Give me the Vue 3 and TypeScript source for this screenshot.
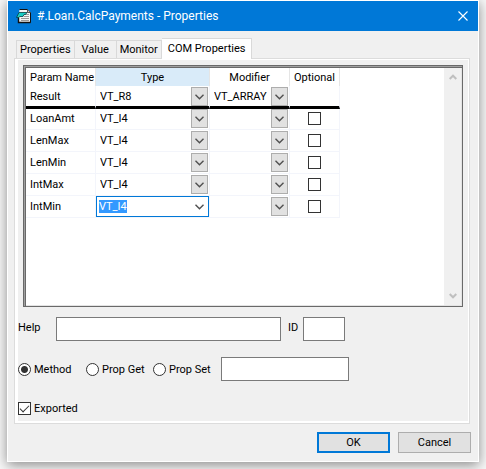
<script setup lang="ts">
import { ref } from 'vue'

interface Param {
  name: string
  type: string
  modifier: string
  optional: boolean | null
}

const tabs = ['Properties', 'Value', 'Monitor', 'COM Properties']
const activeTab = ref('COM Properties')
const types = ['VT_I4', 'VT_R8']
const modifiers = ['', 'VT_ARRAY']
const editing = ref('IntMin')
const kind = ref('Method')
const help = ref('')
const id = ref('')
const propName = ref('')
const exported = ref(true)

const params = ref<Param[]>([
  { name: 'Result', type: 'VT_R8', modifier: 'VT_ARRAY', optional: null },
  { name: 'LoanAmt', type: 'VT_I4', modifier: '', optional: false },
  { name: 'LenMax', type: 'VT_I4', modifier: '', optional: false },
  { name: 'LenMin', type: 'VT_I4', modifier: '', optional: false },
  { name: 'IntMax', type: 'VT_I4', modifier: '', optional: false },
  { name: 'IntMin', type: 'VT_I4', modifier: '', optional: false },
])
</script>

<template>
  <main class="dialog">
    <header class="titlebar">
      <svg class="app-icon" width="16" height="16" viewBox="0 0 16 16" aria-hidden="true">
        <path d="M3.500 1.500H11.500L14.500 4.500V14.500H2.500V9" fill="#f4f4f4" stroke="#111" />
        <path d="M11.500 1.500V4.500H14.500" fill="#ccc" stroke="#333" stroke-width=".8" />
        <path d="M2.500 10V14.500H14.500" fill="none" stroke="#111" stroke-width="1.400" />
        <path d="M9 6.500H13M8 8.500H13M5 10.500H13M5 12.500H13" stroke="#999" />
        <path d="M.5 9.500L3 4.500H11L9.500 6.500H8L7 8.500H4L2.500 9.500Z" fill="#19cdc4" stroke="#063f43" stroke-width=".8" />
      </svg>
      <h1>#.Loan.CalcPayments - Properties</h1>
      <button class="close" type="button" aria-label="Close">
        <svg width="10" height="10" viewBox="0 0 10 10"><path d="M.5 .5L9.500 9.500M9.500 .5L.5 9.500" stroke="#fff" stroke-width="1.100" /></svg>
      </button>
    </header>

    <div class="content">
      <nav class="tabs" role="tablist">
        <button
          v-for="tab in tabs"
          :key="tab"
          type="button"
          role="tab"
          class="tab"
          :class="{ active: tab === activeTab }"
          :aria-selected="tab === activeTab"
          @click="activeTab = tab"
        >{{ tab }}</button>
      </nav>

      <section class="panel">
        <div class="list">
          <div class="list-body">
            <table>
              <colgroup>
                <col class="c-name"><col class="c-type"><col class="c-mod"><col class="c-opt">
              </colgroup>
              <thead>
                <tr>
                  <th class="left">Param Name</th>
                  <th class="current">Type</th>
                  <th>Modifier</th>
                  <th>Optional</th>
                </tr>
              </thead>
              <tbody>
                <tr v-for="p in params" :key="p.name" :class="{ result: p.optional === null }">
                  <td class="name">{{ p.name }}</td>
                  <td>
                    <div class="combo" :class="{ editing: p.name === editing }">
                      <select v-model="p.type" :aria-label="p.name + ' type'">
                        <option v-for="t in types" :key="t">{{ t }}</option>
                      </select>
                      <span class="arrow"><svg width="9" height="6" viewBox="0 0 9 6"><path d="M.5 .7L4.500 4.700L8.500 .7" /></svg></span>
                    </div>
                  </td>
                  <td>
                    <div class="combo">
                      <select v-model="p.modifier" :aria-label="p.name + ' modifier'">
                        <option v-for="m in modifiers" :key="m">{{ m }}</option>
                      </select>
                      <span class="arrow"><svg width="9" height="6" viewBox="0 0 9 6"><path d="M.5 .7L4.500 4.700L8.500 .7" /></svg></span>
                    </div>
                  </td>
                  <td class="opt">
                    <input v-if="p.optional !== null" v-model="p.optional" class="check" type="checkbox" :aria-label="p.name + ' optional'">
                  </td>
                </tr>
              </tbody>
            </table>
          </div>
          <div class="scrollbar" aria-hidden="true">
            <svg width="8" height="6" viewBox="0 0 8 6"><path d="M.7 5L4 1.700L7.300 5" /></svg>
            <svg width="8" height="6" viewBox="0 0 8 6"><path d="M.7 1L4 4.300L7.300 1" /></svg>
          </div>
        </div>

        <div class="row help-row">
          <label for="help" class="help-label">Help</label>
          <input id="help" v-model="help" class="field help" type="text">
          <label for="id" class="id-label">ID</label>
          <input id="id" v-model="id" class="field id" type="text">
        </div>

        <div class="row kind-row">
          <label class="choice method"><input v-model="kind" class="radio" type="radio" name="kind" value="Method">Method</label>
          <label class="choice get"><input v-model="kind" class="radio" type="radio" name="kind" value="Prop Get">Prop Get</label>
          <label class="choice set"><input v-model="kind" class="radio" type="radio" name="kind" value="Prop Set">Prop Set</label>
          <input v-model="propName" class="field prop-name" type="text" aria-label="Property name">
        </div>

        <label class="choice"><input v-model="exported" class="check" type="checkbox">Exported</label>
      </section>

      <footer class="actions">
        <button type="button" class="btn default">OK</button>
        <button type="button" class="btn">Cancel</button>
      </footer>
    </div>
  </main>
</template>

<style>
body {
  margin: 0;
  background: #f8f8f8;
}
#app {
  display: flow-root;
  overflow: hidden;
  padding-bottom: 7px;
}
</style>

<style scoped>
.dialog {
  margin: 0 7px;
  border: 1px solid #fff;
  background: #f0f0f0;
  box-shadow: 0 3px 12px rgba(0, 0, 0, 0.45);
  font-family: Roboto, "Liberation Sans", sans-serif;
  font-size: 11px;
  line-height: 13px;
  color: #000;
}
button, input, select {
  margin: 0;
  padding: 0;
  border: 0;
  font: inherit;
  color: inherit;
}
svg {
  display: block;
  fill: none;
}
.titlebar {
  display: flex;
  align-items: center;
  height: 30px;
  padding: 0 10px 0 8px;
  background: #0078d7;
  color: #fff;
}
h1 {
  flex: 1;
  margin: 0 0 0 5px;
  font-size: 12px;
  font-weight: 400;
  line-height: 16px;
  white-space: nowrap;
}
.close {
  background: none;
}
.content {
  padding: 7px 7px 8px 6px;
}
.tabs {
  display: flex;
  align-items: flex-end;
  padding-left: 2px;
}
.tab {
  min-width: 42px;
  height: 18px;
  padding: 0 3px;
  border: 1px solid #d9d9d9;
  border-width: 1px 1px 0 0;
  background: #f0f0f0;
  white-space: nowrap;
}
.tab:first-child {
  border-left-width: 1px;
}
.tab.active {
  height: 21px;
  margin-bottom: -1px;
  padding: 0 6px 2px;
  background: #fff;
}
.panel {
  margin-right: 1px;
  padding: 6px 6px 8px 3px;
  border: 1px solid #dcdcdc;
  box-shadow: inset 3px 0 #fff, inset -1px 0 #fff, inset 0 1px #fff, inset 0 -2px #fff;
}
.list {
  display: flex;
  box-sizing: border-box;
  height: 242px;
  margin: 0 0 10px 5px;
  padding: 2px 0 0 2px;
  border: 1px solid #696969;
  box-shadow: inset 1px 1px #a0a0a0, inset 2px 2px #696969;
  background: #fff;
}
.list-body {
  flex: 1;
  min-width: 0;
  border-bottom: 1px solid #e3e3e3;
}
.scrollbar {
  display: flex;
  flex-direction: column;
  justify-content: space-between;
  align-items: center;
  width: 17px;
  padding: 6px 0;
  border: 1px solid #e3e3e3;
  border-width: 0 1px 1px 0;
  background: #f0f0f0;
}
.scrollbar path {
  stroke: #bfbfbf;
  stroke-width: 2;
}
table {
  width: 314px;
  table-layout: fixed;
  border-collapse: separate;
  border-spacing: 0;
}
.c-name { width: 70px; }
.c-type { width: 114px; }
.c-mod { width: 80px; }
.c-opt { width: 50px; }
th {
  height: 18px;
  padding: 0;
  border-right: 1px solid #e5e5e5;
  font-weight: 400;
  white-space: nowrap;
}
th.left {
  padding-left: 4px;
  text-align: left;
}
th.current {
  background: #d9ebf9;
}
td {
  box-sizing: border-box;
  height: 22px;
  padding: 0;
  border-right: 1px solid #f3f5fb;
  border-bottom: 1px solid #f3f5fb;
}
.result td {
  height: 23px;
  padding-top: 1px;
  border-bottom: 3px solid #000;
}
.result + tr td {
  height: 21px;
  padding-bottom: 1px;
}
.name {
  padding-left: 4px;
}
.combo {
  display: flex;
  align-items: center;
  box-sizing: border-box;
  height: 19px;
  padding: 0 1px 0 4px;
}
.combo select {
  flex: 1;
  min-width: 0;
  height: 13px;
  margin-right: -17px;
  padding-right: 17px;
  appearance: none;
  border-radius: 0;
  background: transparent;
  outline: 0;
}
.arrow {
  display: flex;
  flex: none;
  align-items: center;
  justify-content: center;
  box-sizing: border-box;
  width: 17px;
  height: 19px;
  border: 1px solid #adadad;
  background: #e1e1e1;
  pointer-events: none;
}
.arrow path {
  stroke: #505050;
  stroke-width: 1.4;
}
.combo.editing {
  justify-content: space-between;
  height: 21px;
  padding: 0 0 0 2px;
  border: 1px solid #0078d7;
  background: #fff;
}
.combo.editing select {
  flex: none;
  field-sizing: content;
  margin: 0;
  padding: 0;
  background: #3399ff;
  color: #fff;
}
.combo.editing .arrow {
  border-color: transparent;
  background: none;
}
.opt {
  line-height: 0;
  text-align: center;
}
.check {
  appearance: none;
  box-sizing: border-box;
  width: 13px;
  height: 13px;
  border: 1px solid #333;
  background: #fff;
  vertical-align: middle;
}
.check:checked::before {
  content: "";
  display: block;
  box-sizing: border-box;
  width: 9px;
  height: 5px;
  margin: 2px 1px;
  border: solid #333;
  border-width: 0 0 1px 1px;
  transform: rotate(-45deg);
}
.radio {
  appearance: none;
  box-sizing: border-box;
  width: 13px;
  height: 13px;
  border: 1px solid #333;
  border-radius: 50%;
  background: #fff;
}
.radio:checked {
  background: radial-gradient(circle, #333 3px, #fff 4px);
}
.row {
  display: flex;
  align-items: center;
}
.help-row {
  margin-bottom: 16px;
}
.help-label {
  width: 38px;
  padding-bottom: 3px;
}
.id-label {
  width: 15px;
  margin-left: 7px;
  padding-bottom: 3px;
}
.field {
  box-sizing: border-box;
  min-width: 0;
  height: 24px;
  padding: 0 3px;
  border: 1px solid #7a7a7a;
  background: #fff;
}
.help { flex: 0 1 225px; }
.id { flex: 0 1 42px; }
.prop-name { flex: 0 1 128px; }
.kind-row {
  margin-bottom: 21px;
}
.choice {
  display: flex;
  align-items: center;
  gap: 3px;
  white-space: nowrap;
}
.method, .set {
  width: 68px;
}
.get {
  width: 67px;
}
.actions {
  display: flex;
  justify-content: flex-end;
  gap: 8px;
  padding-top: 8px;
}
.btn {
  box-sizing: border-box;
  width: 73px;
  height: 21px;
  border: 1px solid #adadad;
  background: #e1e1e1;
}
.btn.default {
  border: 2px solid #0078d7;
}
</style>
